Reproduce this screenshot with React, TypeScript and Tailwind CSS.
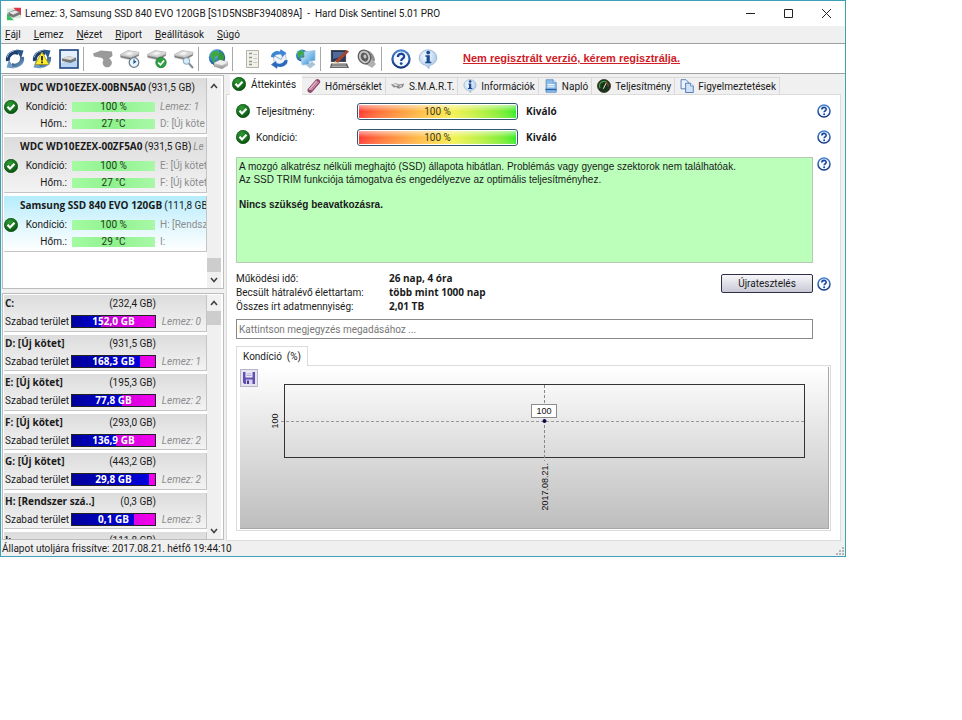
import { useState } from "react";
import type { ReactNode } from "react";

type Disk = {
  name: string;
  size: string;
  suffix?: string;
  health: string;
  temperature: string;
  notes: [string, string];
  italicNote?: boolean;
};

type Volume = {
  label: string;
  size: string;
  free?: string;
  disk?: string;
  used: number;
};

const DISKS: Disk[] = [
  {
    name: "WDC WD10EZEX-00BN5A0",
    size: "(931,5 GB)",
    health: "100 %",
    temperature: "27 °C",
    notes: ["Lemez: 1", "D: [Új köte"],
    italicNote: true,
  },
  {
    name: "WDC WD10EZEX-00ZF5A0",
    size: "(931,5 GB)",
    suffix: "Le",
    health: "100 %",
    temperature: "27 °C",
    notes: ["E: [Új kötet", "F: [Új kötet"],
  },
  {
    name: "Samsung SSD 840 EVO 120GB",
    size: "(111,8 GB)",
    health: "100 %",
    temperature: "29 °C",
    notes: ["H: [Rendsz", "I:"],
  },
];

const VOLUMES: Volume[] = [
  { label: "C:", size: "(232,4 GB)", free: "152,0 GB", disk: "Lemez: 0", used: 35 },
  { label: "D: [Új kötet]", size: "(931,5 GB)", free: "168,3 GB", disk: "Lemez: 1", used: 82 },
  { label: "E: [Új kötet]", size: "(195,3 GB)", free: "77,8 GB", disk: "Lemez: 2", used: 60 },
  { label: "F: [Új kötet]", size: "(293,0 GB)", free: "136,9 GB", disk: "Lemez: 2", used: 53 },
  { label: "G: [Új kötet]", size: "(443,2 GB)", free: "29,8 GB", disk: "Lemez: 2", used: 93 },
  { label: "H: [Rendszer szá..]", size: "(0,3 GB)", free: "0,1 GB", disk: "Lemez: 3", used: 75 },
  { label: "I:", size: "(111,8 GB)", used: 0 },
];

const MENU = ["Fájl", "Lemez", "Nézet", "Riport", "Beállítások", "Súgó"];

const STATS = [
  ["Működési idő:", "26 nap, 4 óra"],
  ["Becsült hátralévő élettartam:", "több mint 1000 nap"],
  ["Összes írt adatmennyiség:", "2,01 TB"],
];

function Defs() {
  return (
    <svg width="0" height="0" className="absolute" aria-hidden="true">
      <defs>
        <radialGradient id="green" cx="40%" cy="30%" r="75%">
          <stop offset="0" stopColor="#2f9a35" />
          <stop offset="1" stopColor="#07520d" />
        </radialGradient>
        <linearGradient id="blue" x1="0" y1="0" x2="0" y2="1">
          <stop offset="0" stopColor="#4a86d0" />
          <stop offset="1" stopColor="#12357f" />
        </linearGradient>
        <linearGradient id="navy" x1="0" y1="0" x2="1" y2="1">
          <stop offset="0" stopColor="#16345f" />
          <stop offset="1" stopColor="#6f9cc4" />
        </linearGradient>
        <linearGradient id="metal" x1="0" y1="0" x2="0" y2="1">
          <stop offset="0" stopColor="#f2f2f2" />
          <stop offset="1" stopColor="#8e8e8e" />
        </linearGradient>
        <radialGradient id="bubble" cx="40%" cy="35%" r="70%">
          <stop offset="0" stopColor="#ffffff" />
          <stop offset="1" stopColor="#9fc4e8" />
        </radialGradient>
        <radialGradient id="globe" cx="35%" cy="30%" r="75%">
          <stop offset="0" stopColor="#6cc4f5" />
          <stop offset="1" stopColor="#063f8f" />
        </radialGradient>
        <linearGradient id="screen" x1="0" y1="0" x2="1" y2="1">
          <stop offset="0" stopColor="#c4e9ff" />
          <stop offset="1" stopColor="#3f95d8" />
        </linearGradient>
      </defs>
    </svg>
  );
}

function Icon({ className, children }: { className?: string; children: ReactNode }) {
  return (
    <svg viewBox="0 0 20 20" className={className ?? "size-5"} aria-hidden="true">
      {children}
    </svg>
  );
}

function CheckIcon() {
  return (
    <Icon className="size-3.5 shrink-0">
      <circle cx="10" cy="10" r="9.5" fill="url(#green)" stroke="#0a4f10" />
      <path d="M5 9.5 8.6 13.500 15 6.8" fill="none" stroke="#fff" strokeWidth="3.200" />
    </Icon>
  );
}

function HelpIcon({ className }: { className?: string }) {
  return (
    <Icon className={className}>
      <circle cx="10" cy="10" r="8.6" fill="#f4f9ff" stroke="url(#blue)" strokeWidth="2.2" />
      <path d="M6.900 8c0-4.200 6.200-4.200 6.200-.6 0 2.300-2.900 2.300-2.900 4.500" fill="none" stroke="#1c449c" strokeWidth="2.300" />
      <circle cx="10.200" cy="14.600" r="1.400" fill="#1c449c" />
    </Icon>
  );
}

function InfoIcon({ className }: { className?: string }) {
  return (
    <Icon className={className}>
      <path d="M10 .8a8.8 8 0 0 0-8.8 8c0 3.800 2.600 6.600 6.300 7.500L11 19.600l.3-3.200c4.300-.6 7.500-3.700 7.500-7.600A8.800 8 0 0 0 10 .8Z" fill="url(#bubble)" stroke="#8aa6c8" strokeWidth=".7" />
      <circle cx="10.200" cy="3.600" r="1.900" fill="#174a91" />
      <path d="M7.300 6.300h4.500v6.400h1.500v1.500H7.200v-1.500h1.400V7.800H7.300Z" fill="#174a91" />
    </Icon>
  );
}

// Two half-circle arrows chasing each other
function RefreshShape() {
  return (
    <>
      <path d="M13.500 4.200A7.300 7.300 0 0 0 3 12" fill="none" stroke="#1d3f6e" strokeWidth="4" />
      <path d="M11 .5 18.500 1.500 16 9.500Z" fill="#2a5687" />
      <path d="M6.500 15.800A7.300 7.300 0 0 0 17 8" fill="none" stroke="url(#navy)" strokeWidth="4" />
      <path d="M9 19.500 1.500 18.500 4 10.500Z" fill="#6f9cc4" />
      <path d="M2.200 8.500A8.500 8.500 0 0 1 9 2" fill="none" stroke="#8fb4d6" strokeWidth="1" />
    </>
  );
}

function DriveShape() {
  return (
    <>
      <path d="M.5 5.500 8 1.500l11 1.800-.5 3.500-7.500 4L.8 8.500Z" fill="url(#metal)" stroke="#9a9a9a" strokeWidth=".6" />
      <path d="M1 5.700 11 8l8-4.500L8 1.800Z" fill="#d6d6d6" />
      <path d="M5 5 9 3l5 .8-4 2.200Z" fill="#f4f4f4" />
      <path d="M.8 7.500 11 9.800l7.700-4" fill="none" stroke="#6f6f6f" strokeWidth=".9" />
    </>
  );
}

function GlobeShape({ cx, cy, r }: { cx: number; cy: number; r: number }) {
  return (
    <>
      <circle cx={cx} cy={cy} r={r} fill="url(#globe)" />
      <path
        d={`M${cx - r * 0.8} ${cy - r * 0.3}q${r * 0.3} ${-r * 0.6} ${r * 0.9} ${-r * 0.5}l${r * 0.1} ${r * 0.5}-${r * 0.5} ${r * 0.3} ${r * 0.1} ${r * 0.6}-${r * 0.2} ${r * 0.1}Z`}
        fill="#3faa3c"
      />
      <path
        d={`M${cx + r * 0.3} ${cy - r * 0.8}q${r * 0.6} ${r * 0.3} ${r * 0.6} ${r * 0.9}l-${r * 0.4} ${r * 0.6}-${r * 0.4}-${r * 0.6}Z`}
        fill="#35983a"
      />
    </>
  );
}

const TOOLBAR: { label: string; icon: ReactNode }[][] = [
  [
    { label: "Frissítés", icon: <Icon><RefreshShape /></Icon> },
    {
      label: "Újraellenőrzés",
      icon: (
        <Icon>
          <RefreshShape />
          <path d="M10 3 17 15.500H3Z" fill="#ffee2b" stroke="#a89410" strokeWidth=".8" />
          <path d="M10 7v4.600M10 12.600v1.700" stroke="#222" strokeWidth="1.800" />
        </Icon>
      ),
    },
    {
      label: "Lemez adatai",
      icon: (
        <Icon>
          <rect x="1" y="1" width="18" height="18" fill="#b9d5f3" stroke="#1d4380" strokeWidth="1.600" />
          <path d="M2 2h16v8L2 14Z" fill="#e4f0fc" />
          <path d="m3 9.500 6-2.300 8 1.300v3l-5.500 2.600L3 12Z" fill="#777" />
          <path d="m3 9.500 6-2.300 8 1.300-5.300 2.600Z" fill="#dcdcdc" />
        </Icon>
      ),
    },
  ],
  [
    {
      label: "Lemez leállítása",
      icon: (
        <Icon>
          <path d="M0 4.500 8 1.500l11 1 .5 4.500-3.500 2.500a4.600 4.600 0 1 1-5.500 1.600L9 9 1 7.500Z" fill="#9a9a9a" />
        </Icon>
      ),
    },
    {
      label: "Rövid teszt",
      icon: (
        <Icon>
          <DriveShape />
          <circle cx="14" cy="13.500" r="4.800" fill="#e9f3fb" stroke="#6c7f90" strokeWidth="1.300" />
          <path d="M14 10.500v3.200l2-1.500" fill="none" stroke="#1e4c86" strokeWidth="1.200" />
        </Icon>
      ),
    },
    {
      label: "Teljes teszt",
      icon: (
        <Icon>
          <DriveShape />
          <circle cx="14" cy="13.500" r="5.200" fill="#2fa043" stroke="#1c7a2e" strokeWidth=".8" />
          <path d="m11.200 13.500 2.200 2.300 3.700-4.300" fill="none" stroke="#fff" strokeWidth="1.700" />
        </Icon>
      ),
    },
    {
      label: "Felület teszt",
      icon: (
        <Icon>
          <DriveShape />
          <circle cx="12.500" cy="12" r="3.300" fill="#d5ecf8" stroke="#8aa3b4" />
          <path d="m15 14.500 4 4.500" stroke="#7d8d99" strokeWidth="2" />
        </Icon>
      ),
    },
  ],
  [
    {
      label: "Hálózati lemezek",
      icon: (
        <Icon>
          <GlobeShape cx={9} cy={8.500} r={8.200} />
          <path d="m6 14 6-3 8 2v3l-6 3.800-8-2.500Z" fill="url(#metal)" stroke="#8c8c8c" strokeWidth=".5" />
          <path d="m6 14 6-3 8 2-6 3.300Z" fill="#eeeeee" />
        </Icon>
      ),
    },
  ],
  [
    {
      label: "Riport mentése",
      icon: (
        <Icon>
          <path d="M4.500 1.500h12v17h-12Z" fill="#f1f1ea" stroke="#b3b3a8" />
          <path d="M7 4.500h3M7 8.500h3M7 12.500h3M7 15.500h3" stroke="#8f978f" strokeWidth="1.500" />
          <path d="M11.500 5.500H15M11.500 9.500H15M11.500 13.500H15" stroke="#c4c8c0" />
        </Icon>
      ),
    },
    {
      label: "Riport küldése",
      icon: (
        <Icon>
          <path d="m4 6 12-2 2 10.500L6 17Z" fill="#eef5fb" stroke="#9ab0c6" strokeWidth=".7" />
          <path d="m4 6 8 4.500 4-6.500" fill="none" stroke="#9ab0c6" />
          <path d="M2 8C2 3.500 7 .8 11 2.500l.5-2.300L17.500 4 13 8l-.8-2.500C9 4.500 6 5.500 5 8.500Z" fill="#3d86d6" />
          <path d="M18.500 11c.5 5-5 8-10 6.500L8 19.800 2 15.500l5-3.500.7 2.200c3.500 1.200 6.800 0 7.800-3Z" fill="#2b69bb" />
        </Icon>
      ),
    },
    {
      label: "Hálózat",
      icon: (
        <Icon>
          <GlobeShape cx={6} cy={6.500} r={6} />
          <path d="m8 3 11-1.500v10L9 13Z" fill="url(#screen)" stroke="#9cc0dc" strokeWidth=".8" />
          <path d="m5 9 8-.5v7l-7 .5Z" fill="url(#screen)" stroke="#aac8de" strokeWidth=".6" />
          <path d="m10 16 6-3.500 3.500 3-5.500 4Z" fill="#a9c3d8" />
        </Icon>
      ),
    },
  ],
  [
    {
      label: "Beállítások",
      icon: (
        <Icon>
          <path d="M1.500 1.500h14v11h-14Z" fill="#24385f" stroke="#4a4a4a" strokeWidth="1.200" />
          <path d="M3 3h11v4L3 10Z" fill="#52699a" />
          <path d="M1 14.500h16l2 4.500H0Z" fill="#595959" />
          <path d="M2 16h14M1.500 17.700h15.500" stroke="#d8d8d8" strokeWidth=".8" />
          <path d="m5 12 11.500-11 2.500 1.500L8 14Z" fill="#a4452f" />
          <path d="m5 12-1.500 3L8 14Z" fill="#e8cf9c" />
        </Icon>
      ),
    },
    {
      label: "Hangjelzés",
      icon: (
        <Icon>
          <path d="M7 1.500c5-1 10 3 11 9.500l-3.500 7L6 14Z" fill="#8f8f8f" />
          <path d="m13 8 6 7-4 4-7-5Z" fill="#b1b1b1" />
          <ellipse cx="7.500" cy="8" rx="6" ry="7" transform="rotate(-25 7.500 8)" fill="#c9c9c9" stroke="#5c5c5c" strokeWidth="1.300" />
          <ellipse cx="7.500" cy="8" rx="3.600" ry="4.600" transform="rotate(-25 7.500 8)" fill="#5b5b5b" />
          <ellipse cx="8" cy="7.500" rx="1.500" ry="2" transform="rotate(-25 8 7.500)" fill="#c4c4c4" />
        </Icon>
      ),
    },
  ],
  [
    { label: "Súgó", icon: <HelpIcon className="size-5" /> },
    { label: "Névjegy", icon: <InfoIcon className="size-5" /> },
  ],
];

const TABS: { label: string; icon: ReactNode }[] = [
  { label: "Áttekintés", icon: <CheckIcon /> },
  {
    label: "Hőmérséklet",
    icon: (
      <Icon className="size-3.5 shrink-0">
        <path d="M4.500 16 15 4" stroke="#8e4a68" strokeWidth="7.500" strokeLinecap="round" />
        <path d="M4 14.500 13.500 3.500" stroke="#e3b3c8" strokeWidth="2.400" strokeLinecap="round" />
        <path d="M6 16 16.500 4" stroke="#d795b2" strokeWidth="1.600" />
      </Icon>
    ),
  },
  {
    label: "S.M.A.R.T.",
    icon: (
      <Icon className="size-3.5 shrink-0">
        <path d="m0 8 7-2 5 2 7-1.500-2 5-6 2.500-4-2.500-3 .5Z" fill="#8a8a8a" />
        <path d="m2 8 5-1.200 4 2-4 1.400Z" fill="#dedede" />
        <path d="m12 9.500 4-1.500-1 3-3 .8Z" fill="#d0d0d0" />
      </Icon>
    ),
  },
  { label: "Információk", icon: <InfoIcon className="size-3.5 shrink-0" /> },
  {
    label: "Napló",
    icon: (
      <Icon className="size-3.5 shrink-0">
        <path d="M3 1h10l4.500 4.500V19H3Z" fill="#8fbdea" stroke="#4b82bd" />
        <path d="M13 1v4.500h4.500" fill="#e2f0fc" stroke="#4b82bd" />
        <path d="M5 8h10M5 11h10" stroke="#f4faff" strokeWidth="1.500" />
        <path d="M2 15h16" stroke="#255fa3" strokeWidth="2" />
      </Icon>
    ),
  },
  {
    label: "Teljesítmény",
    icon: (
      <Icon className="size-3.5 shrink-0">
        <circle cx="10" cy="10" r="9.300" fill="#16351c" stroke="#3b3325" strokeWidth="1.200" />
        <path d="M4.500 13A6.300 6.300 0 0 1 14 5" fill="none" stroke="#4d9b4a" strokeWidth="1.800" />
        <path d="M14 5a6.300 6.300 0 0 1 2 6" fill="none" stroke="#a23c26" strokeWidth="1.800" />
        <path d="m9 14 4-8" stroke="#e4ecd9" strokeWidth="1.400" />
      </Icon>
    ),
  },
  {
    label: "Figyelmeztetések",
    icon: (
      <Icon className="size-3.5 shrink-0">
        <path d="M1.500 1h7L12 4.500V14H1.500Z" fill="#eaf3fd" stroke="#3f6db0" strokeWidth="1.200" />
        <path d="M8 6h7l4 4v9.300H8Z" fill="#cfe2f8" stroke="#3f6db0" strokeWidth="1.200" />
        <path d="M15 6v4h4" fill="#fff" stroke="#3f6db0" />
      </Icon>
    ),
  },
];

function Bold({ children }: { children: ReactNode }) {
  return <b className="font-['Open_Sans','Noto_Sans',sans-serif] font-bold">{children}</b>;
}

function ScrollArrow({ up }: { up?: boolean }) {
  return (
    <button type="button" aria-label={up ? "Fel" : "Le"} className="flex h-4 items-center justify-center">
      <svg viewBox="0 0 8 6" className="h-1.5 w-2" aria-hidden="true">
        <path d={up ? "M1 5 4 1.500 7 5" : "M1 1 4 4.500 7 1"} fill="none" stroke="#444" strokeWidth="1.600" />
      </svg>
    </button>
  );
}

function ScrollBar({ bottom }: { bottom?: boolean }) {
  return (
    <div className="flex w-3.5 shrink-0 flex-col bg-[#f0f0f0]">
      <ScrollArrow up />
      <div className={bottom ? "flex flex-1 flex-col justify-end" : "flex flex-1 flex-col"}>
        <div className="h-3.5 bg-[#cdcdcd]" />
      </div>
      <ScrollArrow />
    </div>
  );
}

function GreenBar({ label, value }: { label: string; value: string }) {
  return (
    <div
      role="img"
      aria-label={`${label} ${value}`}
      className="flex h-2.5 items-center justify-center bg-linear-to-r from-[#a4fba2] via-[#8ff28d] to-[#a9f8a8] text-[#1c3a1c]"
    >
      {value}
    </div>
  );
}

function DiskItem({ disk, selected, onSelect }: { disk: Disk; selected: boolean; onSelect: () => void }) {
  return (
    <li
      onClick={onSelect}
      className={`mb-[3px] h-14 overflow-hidden border-r border-b border-[#c4c4c4] whitespace-nowrap ${
        selected
          ? "bg-linear-to-b from-[#b5ecfc] via-[#ddf6fd] to-white"
          : "bg-linear-to-b from-[#dcdcdc] to-[#f3f3f3]"
      }`}
    >
      <div className="mb-0.5 flex h-[18px] items-center gap-0.5 pl-4">
        <Bold>{disk.name}</Bold>
        <span>{disk.size}</span>
        {disk.suffix && <i className="text-[#8d8d8d]">{disk.suffix}</i>}
      </div>
      <div className="grid grid-cols-[14px_44px_83px_1fr] items-center gap-x-[5px]">
        <CheckIcon />
        <span className="text-right leading-[17px]">Kondíció:</span>
        <GreenBar label="Kondíció:" value={disk.health} />
        <span className={disk.italicNote ? "text-[#8d8d8d] italic" : "text-[#8d8d8d]"}>{disk.notes[0]}</span>
        <span className="col-start-2 text-right leading-[17px]">Hőm.:</span>
        <GreenBar label="Hőm.:" value={disk.temperature} />
        <span className="text-[#8d8d8d]">{disk.notes[1]}</span>
      </div>
    </li>
  );
}

function VolumeItem({ volume }: { volume: Volume }) {
  return (
    <li className="pb-[3px]">
      <div className="h-full border-r border-b border-[#c4c4c4] bg-linear-to-b from-[#dcdcdc] to-[#f3f3f3] px-px whitespace-nowrap">
        <div className="flex h-[17px] w-[151px] items-center justify-between">
          <Bold>{volume.label}</Bold>
          <span>{volume.size}</span>
        </div>
        {volume.free && (
          <div className="flex h-[19px] items-center">
            <span className="w-[66px]">Szabad terület</span>
            <div className="relative flex h-[13px] w-[85px] items-center justify-center border border-[#222] bg-linear-to-r from-[#a000c0] to-[#f400ee] text-white">
              <div
                className="absolute inset-y-0 left-0 bg-linear-to-r from-[#00009c] to-[#0000dc]"
                style={{ width: `${volume.used}%` }}
              />
              <span className="relative">
                <Bold>{volume.free}</Bold>
              </span>
            </div>
            <i className="flex-1 pr-1 text-right text-[#8d8d8d]">{volume.disk}</i>
          </div>
        )}
      </div>
    </li>
  );
}

function RatingRow({ label }: { label: string }) {
  return (
    <div className="flex h-[26px] items-center pr-[7px]">
      <CheckIcon />
      <span className="ml-1.5 w-[101px]">{label}</span>
      <div className="h-[17px] w-[161px] rounded-[3px] border border-[#33566f] bg-white p-px">
        <div className="h-full bg-linear-to-r from-[#ff1c1c] via-[#f2f040] via-60% to-[#10ea10]">
          <div className="flex h-full items-center justify-center bg-linear-to-b from-white/60 via-white/10 to-white/20 text-[#3a3a20]">
            100 %
          </div>
        </div>
      </div>
      <span className="ml-2">
        <Bold>Kiváló</Bold>
      </span>
      <button type="button" aria-label="Súgó" className="ml-auto">
        <HelpIcon className="size-3.5" />
      </button>
    </div>
  );
}

function HealthChart() {
  return (
    <svg viewBox="0 0 588 161" className="block w-full font-['Liberation_Sans',sans-serif]" fontSize="9" fill="#111">
      <rect x="44.500" y="17.500" width="520" height="73" fill="none" stroke="#333" />
      <path d="M41 54.500h523" stroke="#999" strokeDasharray="3 2" />
      <path d="M304.500 18v76" stroke="#888" strokeDasharray="3 2" />
      <rect x="291.500" y="37.500" width="25" height="13" fill="#fff" stroke="#222" strokeDasharray="1 1" />
      <text x="304" y="47" textAnchor="middle">100</text>
      <circle cx="304.500" cy="54" r="2" fill="#0b0b4a" />
      <text transform="translate(38 54) rotate(-90)" textAnchor="middle">100</text>
      <text transform="translate(308 96) rotate(-90)" textAnchor="end">2017.08.21.</text>
    </svg>
  );
}

export default function App() {
  const [activeDisk, setActiveDisk] = useState(2);
  const [activeTab, setActiveTab] = useState(0);

  return (
    <div className="min-h-screen bg-white">
      <Defs />
      <div className="w-full max-w-[846px] border border-[#3e9fb8] bg-[#f0f0f0] font-['Roboto','Open_Sans',sans-serif] text-[10px] leading-[13px] text-[#1a1a1a]">
        <header className="flex h-[25px] items-center bg-white pl-1.5">
          <Icon className="size-3.5">
            <path d="M0 2h20v14H0Z" fill="#d8e8da" />
            <path d="M9 1h11v11Z" fill="#e0344a" />
            <path d="M0 9v10h10Z" fill="#3bbf62" />
            <path d="m2 8 9-4 8 3-1 4-9 4-7-3Z" fill="#777" />
            <path d="m3 8 8-3 6 2-8 4Z" fill="#e6e6e6" />
          </Icon>
          <h1 className="ml-1 flex-1 whitespace-pre">
            Lemez: 3, Samsung SSD 840 EVO 120GB [S1D5NSBF394089A]{"  -  "}Hard Disk Sentinel 5.01 PRO
          </h1>
          <div className="flex">
            {["M0 5.500h9", "M.5 1.500h8v8h-8Z", "M0 1l9 9M9 1 0 10"].map((d, i) => (
              <button key={d} type="button" aria-label={["Kis méret", "Teljes méret", "Bezárás"][i]} className="flex w-[38px] justify-center">
                <svg viewBox="0 0 9 11" className="h-[11px] w-[9px]" aria-hidden="true">
                  <path d={d} fill="none" stroke="#222" />
                </svg>
              </button>
            ))}
          </div>
        </header>

        <nav className="flex h-[17px] items-center gap-[13px] pl-1">
          {MENU.map((item) => (
            <button key={item} type="button">
              <u>{item[0]}</u>
              {item.slice(1)}
            </button>
          ))}
        </nav>

        <div className="flex h-[31px] items-center border-y border-[#a0a0a0] bg-white">
          {TOOLBAR.map((group, index) => (
            <div key={index} className="flex items-center">
              {index > 0 && <div className="mr-[5px] ml-px h-6 w-px bg-[#a8a8a8]" />}
              {group.map((tool) => (
                <button key={tool.label} type="button" aria-label={tool.label} className="flex w-[27px] justify-center">
                  {tool.icon}
                </button>
              ))}
            </div>
          ))}
          <a href="#register" className="ml-[22px] font-['Liberation_Sans',sans-serif] text-[11px] font-bold text-[#cf2027] underline">
            Nem regisztrált verzió, kérem regisztrálja.
          </a>
        </div>

        <div className="flex h-[467px]">
          <aside className="flex w-[225px] shrink-0 flex-col gap-1 py-px pr-0.5 pl-px">
            <div className="flex h-[214px] border border-[#bcbcbc] bg-white pt-0.5 pr-0.5 pl-px">
              <ul className="min-w-0 flex-1">
                {DISKS.map((disk, index) => (
                  <DiskItem key={disk.name} disk={disk} selected={index === activeDisk} onSelect={() => setActiveDisk(index)} />
                ))}
              </ul>
              <ScrollBar bottom />
            </div>
            <div className="flex flex-1 overflow-hidden border border-[#bcbcbc] bg-white pt-px pr-0.5 pl-px">
              <div className="h-[244px] min-w-0 flex-1 overflow-hidden">
                <ul className="grid h-[277px] auto-rows-fr">
                  {VOLUMES.map((volume) => (
                    <VolumeItem key={volume.label} volume={volume} />
                  ))}
                </ul>
              </div>
              <ScrollBar />
            </div>
          </aside>

          <main className="flex min-w-0 flex-1 flex-col pr-1">
            <div role="tablist" className="flex h-5 items-end pl-1 whitespace-nowrap">
              {TABS.map((tab, index) => (
                <button
                  key={tab.label}
                  type="button"
                  role="tab"
                  aria-selected={index === activeTab}
                  onClick={() => setActiveTab(index)}
                  className={
                    index === activeTab
                      ? "relative z-10 -mb-px flex h-5 items-center gap-[5px] bg-white pr-1.5 pb-0.5 pl-0.5"
                      : "flex h-[17px] items-center gap-1 border-t border-r border-[#d9d9d9] pr-[3px] pl-[5px]"
                  }
                >
                  {tab.icon}
                  {tab.label}
                </button>
              ))}
            </div>

            <section className="flex-1 border border-[#dcdcdc] bg-white pt-[3px] pr-0.5 pl-[9px]">
              <RatingRow label="Teljesítmény:" />
              <RatingRow label="Kondíció:" />

              <div className="mt-[7px] flex items-start gap-1 pr-[7px]">
                <div className="h-[106px] flex-1 border border-[#b5c9b5] bg-[#bbffbb] px-0.5 py-0.5 font-['Liberation_Sans',sans-serif] text-[10px] leading-[13px]">
                  <p>
                    A mozgó alkatrész nélküli meghajtó (SSD) állapota hibátlan. Problémás vagy gyenge szektorok nem találhatóak.
                    <br />
                    Az SSD TRIM funkciója támogatva és engedélyezve az optimális teljesítményhez.
                  </p>
                  <p className="mt-3 font-bold">Nincs szükség beavatkozásra.</p>
                </div>
                <button type="button" aria-label="Súgó">
                  <HelpIcon className="size-3.5" />
                </button>
              </div>

              <div className="mt-2 flex items-start justify-between pr-[7px]">
                <dl className="grid auto-rows-[14px] grid-cols-[153px_auto] items-center">
                  {STATS.map(([label, value]) => (
                    <div key={label} className="contents">
                      <dt>{label}</dt>
                      <dd className="flex">
                        <Bold>{value}</Bold>
                      </dd>
                    </div>
                  ))}
                </dl>
                <div className="mt-[3px] flex items-center gap-1">
                  <button
                    type="button"
                    className="h-[19px] w-[92px] rounded-[2px] border border-[#2f2f45] bg-linear-to-b from-[#f6f6fa] to-[#c9c9d6]"
                  >
                    Újratesztelés
                  </button>
                  <button type="button" aria-label="Súgó">
                    <HelpIcon className="size-3.5" />
                  </button>
                </div>
              </div>

              <input
                aria-label="Megjegyzés"
                placeholder="Kattintson megjegyzés megadásához ..."
                className="mt-1.5 block h-5 w-[calc(100%-25px)] border border-[#8a8a8a] px-0.5 placeholder:text-[#777]"
              />

              <div className="mt-[7px] flex">
                <button type="button" className="relative z-10 -mb-px h-5 border border-b-0 border-[#dcdcdc] bg-white px-1.5 whitespace-pre">
                  {"Kondíció  (%)"}
                </button>
              </div>
              <div className="mr-[7px] border border-[#dcdcdc] p-px pl-[3px]">
                <div className="relative border-r border-b border-[#a8a8a8] bg-linear-to-b from-white via-[#dedede] via-50% to-[#bebebe]">
                  <HealthChart />
                  <button type="button" aria-label="Mentés" className="absolute top-0.5 left-0 flex size-[18px] items-center justify-center border border-[#b9b6cc] bg-[#e4e3ee]">
                    <svg viewBox="0 0 14 14" className="size-3.5" aria-hidden="true">
                      <path d="M1 1h12v12H2.500L1 11.500Z" fill="#6250b0" />
                      <path d="M3.500 1h7v5.500h-7Z" fill="#f1eefb" />
                      <path d="M4.500 2.800h5M4.500 4.600h5" stroke="#9b8fd0" strokeWidth=".8" />
                      <path d="M4 8.500h6.500V13H4Z" fill="#d6d0ee" />
                      <path d="M5 9.500h2V13H5Z" fill="#4a3a98" />
                    </svg>
                  </button>
                </div>
              </div>
            </section>
          </main>
        </div>

        <footer className="flex h-[15px] items-center justify-between pl-px">
          <span>Állapot utoljára frissítve: 2017.08.21. hétfő 19:44:10</span>
          <svg viewBox="0 0 9 9" className="size-[9px] self-end" fill="#b5b5b5" aria-hidden="true">
            <path d="M6 0h2v2H6ZM3 3h2v2H3ZM6 3h2v2H6ZM0 6h2v2H0ZM3 6h2v2H3ZM6 6h2v2H6Z" />
          </svg>
        </footer>
      </div>
    </div>
  );
}
